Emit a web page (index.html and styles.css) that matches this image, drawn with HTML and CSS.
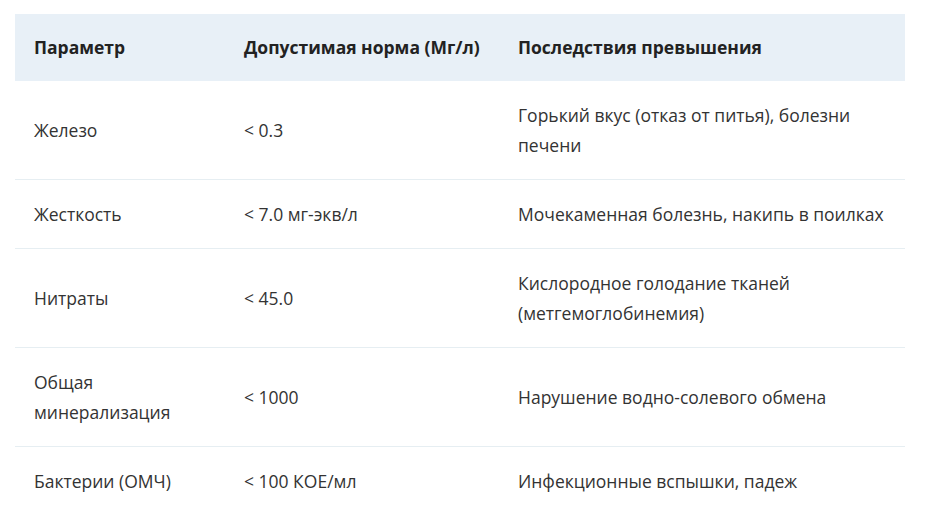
FILE: index.html
```html
<!DOCTYPE html>
<html lang="ru">
<head>
<meta charset="utf-8">
<link rel="stylesheet" href="styles.css">
</head>
<body>
<div class="wrap">
<table class="norms">
<colgroup><col class="c1"><col class="c2"><col class="c3"></colgroup>
<thead>
<tr><th>Параметр</th><th>Допустимая норма (Мг/л)</th><th>Последствия превышения</th></tr>
</thead>
<tbody>
<tr><td>Железо</td><td>&lt; 0.3</td><td>Горький вкус (отказ от питья), болезни печени</td></tr>
<tr><td>Жесткость</td><td>&lt; 7.0 мг-экв/л</td><td>Мочекаменная болезнь, накипь в поилках</td></tr>
<tr><td>Нитраты</td><td>&lt; 45.0</td><td>Кислородное голодание тканей (метгемоглобинемия)</td></tr>
<tr><td>Общая минерализация</td><td>&lt; 1000</td><td>Нарушение водно-солевого обмена</td></tr>
<tr><td>Бактерии (ОМЧ)</td><td>&lt; 100 КОЕ/мл</td><td>Инфекционные вспышки, падеж</td></tr>
</tbody>
</table>
</div>
</body>
</html>
```
FILE: styles.css
```css
html, body { margin: 0; padding: 0; background: #fff; }
body { font-family: "Open Sans", sans-serif; color: #333; }
.wrap { padding: 14px 32px 0 15px; }
.norms { width: 890px; border-collapse: collapse; table-layout: fixed; }
.c1 { width: 210px; }
.c2 { width: 274px; }
.c3 { width: 406px; }
.norms th, .norms td {
  text-align: left; vertical-align: middle;
  font-size: 17.5px; line-height: 30px;
  padding: 19px 19px;
}
.norms th { background: #e8f0f7; font-weight: 700; color: #222; padding: 18px 19px 19px; }
.norms td { border-bottom: 1px solid #e6eef2; }
.norms tbody tr:last-child td { border-bottom: none; }
```
